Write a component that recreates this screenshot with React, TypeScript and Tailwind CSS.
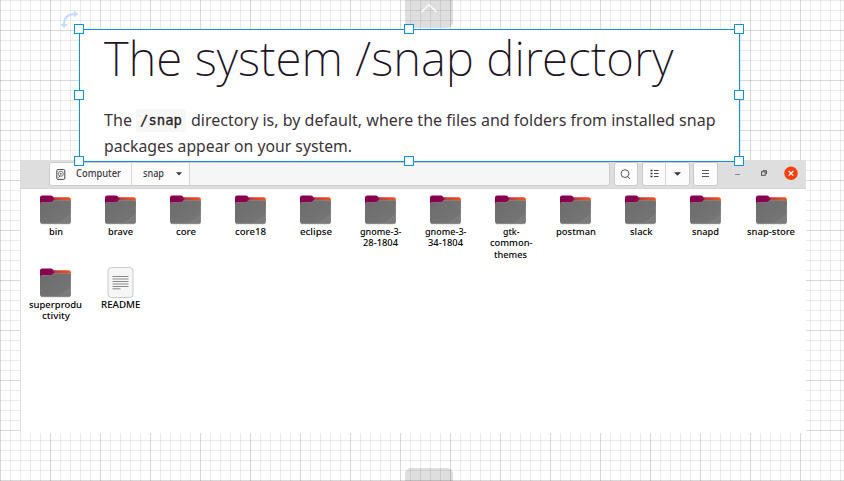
import { useLayoutEffect, useRef, useState } from "react";

type FitProps = { text: string; width: number; className?: string };

// One line of text, condensed or widened to a given width.
function Fit({ text, width, className = "" }: FitProps) {
  const ref = useRef<HTMLSpanElement>(null);
  const [scale, setScale] = useState(1);
  useLayoutEffect(() => {
    if (ref.current) setScale(width / ref.current.getBoundingClientRect().width);
  }, []);
  return (
    <span className="flex shrink-0" style={{ width }}>
      <span
        ref={ref}
        className={"block shrink-0 origin-left whitespace-pre " + className}
        style={{ transform: `scaleX(${scale})` }}
      >
        {text}
      </span>
    </span>
  );
}

function Folder() {
  return (
    <svg className="h-[30px] w-8 shrink-0" viewBox="-0.6 0 32 30">
      <defs>
        <linearGradient id="tab" x1="0" x2="1">
          <stop offset="0" stopColor="#85004f" />
          <stop offset="0.42" stopColor="#8b064c" />
          <stop offset="0.5" stopColor="#c23a3c" />
          <stop offset="1" stopColor="#f8501c" />
        </linearGradient>
        <linearGradient id="front" x1="0" y1="0" x2="1" y2="1">
          <stop offset="0" stopColor="#6c6c6c" />
          <stop offset="0.78" stopColor="#747474" />
          <stop offset="0.8" stopColor="#7d7d7d" />
          <stop offset="1" stopColor="#777" />
        </linearGradient>
      </defs>
      <path d="M0.4 10V2.6Q0.4 0.4 2.6 0.4H11.5Q13 0.4 13.8 2.2H29Q31.3 2.2 31.3 5V10Z" fill="url(#tab)" />
      <path d="M0.4 9.2Q0.4 7.4 2 7.4H11Q12.3 7.4 13 6.4T15 5.2H29.4Q31.3 5.2 31.3 7V26.6Q31.3 28.6 29.3 28.6H2.4Q0.4 28.6 0.4 26.6Z" fill="url(#front)" />
      <path d="M0.8 8.4Q1 7.5 2 7.5H11Q12.3 7.5 13 6.5T15 5.3H29.4Q30.8 5.3 31 6.6" fill="none" stroke="#999" strokeWidth=".5" />
      <path d="M1 28.1Q1.6 28.7 2.6 28.7H29Q30.4 28.7 31 27.8" fill="none" stroke="#555" strokeWidth=".6" />
    </svg>
  );
}

function Readme() {
  return (
    <svg className="h-[32px] w-8 shrink-0" viewBox="-0.5 0 32 32">
      <rect x="3.5" y="0.5" width="25" height="30" rx="3.5" fill="#f6f6f6" stroke="#c4c4c4" strokeWidth=".9" />
      <path d="M8 9.5H24M8 12H24M8 14.5H24M8 17H24M8 19.5H24M8 21.8H16" stroke="#8b8b8b" strokeWidth="1" />
    </svg>
  );
}

type Line = [string, number];
const files: Line[][] = [
  [["bin", 14]],
  [["brave", 25]],
  [["core", 20]],
  [["core18", 31]],
  [["eclipse", 32]],
  [["gnome-3-", 41.5], ["28-1804", 35]],
  [["gnome-3-", 41.5], ["34-1804", 35]],
  [["gtk-", 16.5], ["common-", 42.5], ["themes", 33]],
  [["postman", 40]],
  [["slack", 22.5]],
  [["snapd", 27]],
  [["snap-store", 48]],
  [["superprodu", 53], ["ctivity", 28]],
  [["README", 39.5]],
];

function Handle({ place }: { place: string }) {
  return <div className={"absolute size-2.5 border border-[#0b92e0] bg-white " + place} />;
}

function FileWindow() {
  return (
    <div className="absolute left-5 top-[160px] flex h-[273px] w-[786px] flex-col bg-white">
      <div className="flex h-[29px] shrink-0 items-start border-b border-[#d5d5d5] bg-[#dedede] pl-[29px] pt-[2px]">
        <div className="flex h-6 w-[561px] overflow-hidden rounded-[3px] border border-[#cbcbcb] bg-[#f6f6f6]">
          <div className="flex w-[82px] items-center gap-[10px] border-r border-[#d6d6d6] bg-[#fcfcfc] pl-[5.5px]">
            <svg className="h-[11px] w-[10px] shrink-0" viewBox="0 0 10 11" fill="none" stroke="#444" strokeWidth="1">
              <rect x=".8" y=".6" width="8" height="9.8" rx="1.2" />
              <circle cx="4.8" cy="4.8" r="2.5" strokeWidth=".7" />
              <circle cx="4.8" cy="4.8" r=".5" />
              <path d="M2.4 8.4L4.3 6.5" />
            </svg>
            <Fit text="Computer" width={45} className="text-[9.8px] font-medium leading-[22px] text-[#3d3d3d]" />
          </div>
          <div className="flex w-[58px] items-center gap-[12px] border-r border-[#d6d6d6] bg-[#fcfcfc] pl-[11px]">
            <Fit text="snap" width={21} className="text-[9.8px] font-medium leading-[22px] text-[#3d3d3d]" />
            <svg className="h-1 w-[6px]" viewBox="0 0 6 4"><path d="M0 .2H6L3 3.6Z" fill="#333" /></svg>
          </div>
        </div>
        <div className="ml-1 flex h-6 w-6 items-center justify-center rounded-[3px] border border-[#cbcbcb] bg-[#fcfcfc] pr-px">
          <svg className="size-[11px]" viewBox="0 0 11 11" fill="none" stroke="#444" strokeWidth=".9">
            <circle cx="5" cy="4.6" r="3.9" /><path d="M7.6 7.5L10 10" />
          </svg>
        </div>
        <div className="ml-1 flex h-6 w-[48px] rounded-[3px] border border-[#cbcbcb] bg-[#fcfcfc]">
          <div className="flex w-[23px] items-center justify-center border-r border-[#d6d6d6]">
            <svg className="-mt-px h-[9px] w-[9px]" viewBox="0 0 9 9">
              <path d="M.5 1.5H2.5M.5 4.5H2.5M.5 7.5H2.5" stroke="#333" strokeWidth="1.7" />
              <path d="M4 1.5H8.5M4 4.5H8.5M4 7.5H8.5" stroke="#444" />
            </svg>
          </div>
          <div className="flex flex-1 items-center justify-center pr-px">
            <svg className="h-1 w-[7px]" viewBox="0 0 7 4"><path d="M0 .2H7L3.5 3.8Z" fill="#333" /></svg>
          </div>
        </div>
        <div className="ml-[3px] flex h-6 w-[25px] items-center justify-center rounded-[3px] border border-[#cbcbcb] bg-[#fcfcfc]">
          <svg className="-mt-px h-[7px] w-[7px]" viewBox="0 0 7 7"><path d="M0 .5H7M0 3.5H7M0 6.5H7" stroke="#444" strokeWidth=".9" /></svg>
        </div>
        <div className="ml-[17px] mt-3 h-px w-[5px] bg-[#888]" />
        <svg className="ml-[21px] mt-[8px] size-[6px]" viewBox="0 0 6 6" fill="none" stroke="#444" strokeWidth=".9">
          <rect x=".5" y="1.8" width="3.7" height="3.5" /><path d="M1.7 .6H5.5V4.2" />
        </svg>
        <svg className="ml-[17px] mt-[4px] size-[14px]" viewBox="0 0 14 14">
          <circle cx="7" cy="7.3" r="6.7" fill="#f4410b" />
          <path d="M4.7 5L9.3 9.6M9.3 5L4.7 9.6" stroke="white" strokeWidth="1.3" />
        </svg>
      </div>
      <div className="grid flex-1 grid-cols-[repeat(12,65.05px)] content-start border-l border-[#e0e0e0] pl-[1.5px] pt-[6px] [grid-auto-rows:73px]">
        {files.map((lines, i) => (
          <div key={i} className="flex flex-col items-center">
            <div className="flex h-[31px] shrink-0 items-start">{i === 13 ? <div className="-mt-px"><Readme /></div> : <Folder />}</div>
            {lines.map(([text, width]) => (
              <div key={text} className="pl-px">
                <Fit text={text} width={width} className="text-[9.7px] font-medium leading-[11.3px] text-black" />
              </div>
            ))}
          </div>
        ))}
      </div>
    </div>
  );
}

function ArticleCard() {
  return (
    <div className="absolute left-[79px] top-[29px] h-[133px] w-[661px] border border-[#0b92e0] bg-white pl-6">
      <div className="h-[58px]">
        <Fit text="The system /snap directory" width={569.5} className="-mt-px text-[48px] font-extralight leading-[57px] text-[#20121f]" />
      </div>
      <div className="mt-[19px] flex h-[26px] items-center leading-[26px]">
        <Fit text="The" width={28} className="text-[17px] text-[#3b3439]" />
        <div className="ml-1 mt-px flex h-[23px] w-[50px] justify-center rounded-[3px] bg-[#f7f7f7]">
          <Fit text="/snap" width={42} className="font-['DejaVu_Sans_Mono'] text-[14px] leading-[23px] text-[#222] [-webkit-text-stroke:0.3px_#222]" />
        </div>
        <div className="ml-[5px]"><Fit text="directory is, by default, where the files and folders from installed snap" width={524.5} className="text-[17px] text-[#3b3439]" /></div>
      </div>
      <Fit text="packages appear on your system." width={248} className="text-[17px] leading-[26px] text-[#3b3439]" />
      <Handle place="-left-1.5 -top-1.5" />
      <Handle place="left-[324px] -top-1.5" />
      <Handle place="-right-[5px] -top-1.5" />
      <Handle place="-left-1.5 top-[60px]" />
      <Handle place="-right-[5px] top-[60px]" />
      <Handle place="-left-1.5 top-[126px]" />
      <Handle place="left-[324px] top-[126px]" />
      <Handle place="-right-[5px] top-[126px]" />
    </div>
  );
}

export default function App() {
  return (
    <div className="relative h-[481px] w-[844px] overflow-hidden bg-white font-['Noto_Sans',sans-serif]">
      <svg className="absolute inset-0 size-full">
        <defs>
          <pattern id="grid" width="50" height="50" y="30" patternUnits="userSpaceOnUse">
            <path d="M10.5 0V50M20.5 0V50M30.5 0V50M40.5 0V50M0 10.5H50M0 20.5H50M0 30.5H50M0 40.5H50" stroke="#000" strokeOpacity=".08" />
            <path d="M.5 0V50M0 .5H50" stroke="#000" strokeOpacity=".15" />
          </pattern>
        </defs>
        <rect width="844" height="481" fill="url(#grid)" />
      </svg>
      <div className="absolute left-[405px] top-0 flex h-7 w-12 justify-center rounded-b-[6px] bg-black/13">
        <svg className="mt-[3px] h-[10px] w-[18px]" viewBox="0 0 18 10"><path d="M1.5 9L9 1.5L16.5 9" fill="none" stroke="white" strokeWidth="1.2" /></svg>
      </div>
      <div className="absolute left-[405px] top-[468px] h-5 w-12 rounded-t-[6px] bg-black/13" />
      <svg className="absolute left-[60px] top-[10px] h-[19px] w-[19px]" viewBox="0 0 19 19">
        <path d="M4 15Q4 4 15 4" fill="none" stroke="#c5dbfb" strokeWidth="2" />
        <path d="M14 0.4L18.3 4L14 7.6ZM0.4 14H7.6L4 18Z" fill="#c5dbfb" />
      </svg>
      <FileWindow />
      <ArticleCard />
    </div>
  );
}
